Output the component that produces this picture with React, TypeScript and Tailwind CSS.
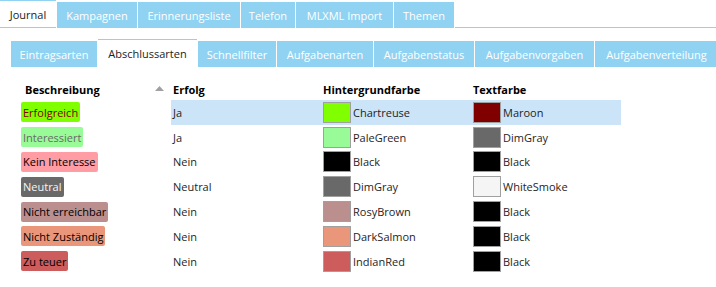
const TOP_TABS = [
  { label: 'Journal', w: 'w-[56px]', active: true },
  { label: 'Kampagnen', w: 'w-[80px]' },
  { label: 'Erinnerungsliste', w: 'w-[102px]' },
  { label: 'Telefon', w: 'w-[54px]' },
  { label: 'MLXML Import', w: 'w-[97px]' },
  { label: 'Themen', w: 'w-[60px]' },
];

const SUB_TABS = [
  { label: 'Eintragsarten', w: 'w-[86px]' },
  { label: 'Abschlussarten', w: 'w-[99px]', active: true },
  { label: 'Schnellfilter', w: 'w-[78px]' },
  { label: 'Aufgabenarten', w: 'w-[96px]' },
  { label: 'Aufgabenstatus', w: 'w-[100px]' },
  { label: 'Aufgabenvorgaben', w: 'w-[119px]' },
  { label: 'Aufgabenverteilung', w: 'w-[123px]' },
];

interface Row {
  name: string;
  badgeBg: string;
  badgeText: string;
  erfolg: string;
  bgName: string;
  bgSwatch: string;
  fgName: string;
  fgSwatch: string;
}

const ROWS: Row[] = [
  { name: 'Erfolgreich', badgeBg: 'bg-[#7fff00]', badgeText: 'text-[#800000]', erfolg: 'Ja', bgName: 'Chartreuse', bgSwatch: 'bg-[#7fff00]', fgName: 'Maroon', fgSwatch: 'bg-[#800000]' },
  { name: 'Interessiert', badgeBg: 'bg-[#98fb98]', badgeText: 'text-[#696969]', erfolg: 'Ja', bgName: 'PaleGreen', bgSwatch: 'bg-[#98fb98]', fgName: 'DimGray', fgSwatch: 'bg-[#696969]' },
  { name: 'Kein Interesse', badgeBg: 'bg-[#ff9ca4]', badgeText: 'text-black', erfolg: 'Nein', bgName: 'Black', bgSwatch: 'bg-black', fgName: 'Black', fgSwatch: 'bg-black' },
  { name: 'Neutral', badgeBg: 'bg-[#696969]', badgeText: 'text-[#f5f5f5]', erfolg: 'Neutral', bgName: 'DimGray', bgSwatch: 'bg-[#696969]', fgName: 'WhiteSmoke', fgSwatch: 'bg-[#f5f5f5]' },
  { name: 'Nicht erreichbar', badgeBg: 'bg-[#bc8f8f]', badgeText: 'text-black', erfolg: 'Nein', bgName: 'RosyBrown', bgSwatch: 'bg-[#bc8f8f]', fgName: 'Black', fgSwatch: 'bg-black' },
  { name: 'Nicht Zuständig', badgeBg: 'bg-[#e9967a]', badgeText: 'text-black', erfolg: 'Nein', bgName: 'DarkSalmon', bgSwatch: 'bg-[#e9967a]', fgName: 'Black', fgSwatch: 'bg-black' },
  { name: 'Zu teuer', badgeBg: 'bg-[#cd5c5c]', badgeText: 'text-black', erfolg: 'Nein', bgName: 'IndianRed', bgSwatch: 'bg-[#cd5c5c]', fgName: 'Black', fgSwatch: 'bg-black' },
];

function TopTabs() {
  return (
    <div className="flex items-end h-[28px] gap-px">
      {TOP_TABS.map((t) =>
        t.active ? (
          <div
            key={t.label}
            className={`${t.w} shrink-0 h-[28px] bg-white border-t border-b border-[#90d2f2] flex items-center justify-center text-[#222]`}
          >
            {t.label}
          </div>
        ) : (
          <div
            key={t.label}
            className={`${t.w} shrink-0 h-[26px] bg-[#90d2f2] flex items-center justify-center text-white`}
          >
            {t.label}
          </div>
        ),
      )}
      <div className="flex-1 h-full border-b border-[#90d2f2]" />
    </div>
  );
}

function SubTabs() {
  return (
    <div className="flex items-end h-[28px] gap-px pl-[11px] mt-[11px] overflow-hidden">
      {SUB_TABS.map((t) =>
        t.active ? (
          <div
            key={t.label}
            className={`${t.w} shrink-0 h-[28px] bg-white border-t border-[#90d2f2] flex items-center justify-center text-[#222]`}
          >
            {t.label}
          </div>
        ) : (
          <div
            key={t.label}
            className={`${t.w} shrink-0 h-[26px] bg-[#90d2f2] flex items-center justify-center text-white`}
          >
            {t.label}
          </div>
        ),
      )}
    </div>
  );
}

function Swatch({ color, name }: { color: string; name: string }) {
  return (
    <div className="flex items-center gap-[2px] pl-[2px]">
      <span className={`w-[28px] h-[21px] border border-[#a0a0a0] ${color}`} />
      <span>{name}</span>
    </div>
  );
}

function Table() {
  return (
    <div className="mt-[11px] pl-[21px] text-[#1e1e1e]">
      <div className="grid grid-cols-[150px_150px_150px_150px] h-[22px] items-center font-bold text-black">
        <div className="pl-[4px] pr-[7px] flex items-center justify-between">
          <span>Beschreibung</span>
          <svg width="9" height="5" viewBox="0 0 9 5" className="mb-[2px]">
            <polygon points="0,5 4.5,0 9,5" fill="#a0a0a0" />
          </svg>
        </div>
        <div className="pl-[2px]">Erfolg</div>
        <div className="pl-[2px]">Hintergrundfarbe</div>
        <div className="pl-[2px]">Textfarbe</div>
      </div>
      {ROWS.map((r, i) => (
        <div key={r.name} className="grid grid-cols-[150px_150px_150px_150px] h-[24.8px] items-center">
          <div className="flex">
            <span className={`h-[20px] px-[2px] rounded-[2px] flex items-center ${r.badgeBg} ${r.badgeText}`}>
              {r.name}
            </span>
          </div>
          <div className={`col-span-3 grid grid-cols-[150px_150px_150px] h-full items-center ${i === 0 ? 'bg-[#cce4f7]' : ''}`}>
            <div className="pl-[2px]">{r.erfolg}</div>
            <Swatch color={r.bgSwatch} name={r.bgName} />
            <Swatch color={r.fgSwatch} name={r.fgName} />
          </div>
        </div>
      ))}
    </div>
  );
}

export default function App() {
  return (
    <div className="w-[716px] h-[287px] bg-white overflow-hidden text-[11px] leading-none font-['Segoe_UI','Open_Sans',sans-serif]">
      <TopTabs />
      <SubTabs />
      <Table />
    </div>
  );
}
